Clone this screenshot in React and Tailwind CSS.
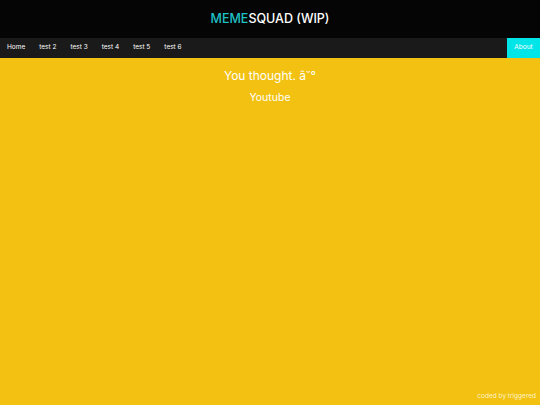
export default function App() {
  const items = ["Home", "test 2", "test 3", "test 4", "test 5", "test 6"];
  return (
    <div className="w-[540px] h-[405px] flex flex-col bg-[#f2c111]" style={{ fontFamily: "Inter, 'Noto Sans', sans-serif" }}>
      <header className="h-[38px] bg-[#050505] flex items-center justify-center text-[12.5px] font-medium text-white">
        <span className="text-[#1fc0c4]">MEME</span>SQUAD (WIP)
      </header>
      <nav className="h-[20px] bg-[#1a1a1a] flex items-stretch text-[6.5px] text-white">
        <div className="flex items-stretch gap-[14px] pl-[7px]">
          {items.map((t) => (
            <a key={t} className="flex items-center">{t}</a>
          ))}
        </div>
        <a className="ml-auto w-[33px] flex items-center justify-center bg-[#00e5e8] text-white">About</a>
      </nav>
      <main className="flex-1 flex flex-col items-center text-white">
        <h1 className="mt-[9px] text-[12px] leading-[18px]">You thought. â˘°</h1>
        <a className="mt-[6px] text-[10.5px] leading-[14px]">Youtube</a>
      </main>
      <footer className="h-[16px] pr-[4px] flex items-center justify-end text-[6.5px] text-[#fdf3cc]">coded by triggered</footer>
    </div>
  );
}
